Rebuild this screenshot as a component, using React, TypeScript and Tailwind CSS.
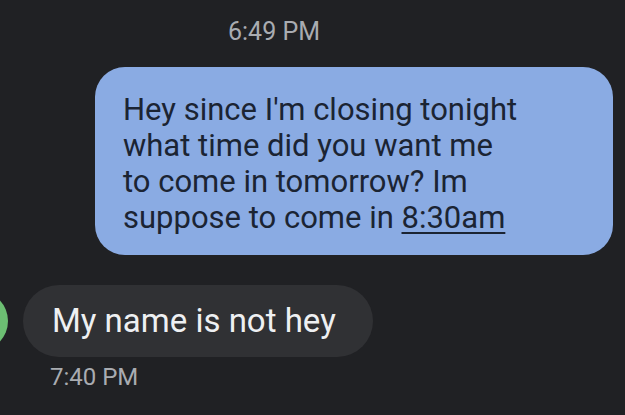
import React from "react";

const App = () => {
  return (
    <div className="w-[625px] h-[415px] overflow-hidden bg-[#202124] font-['Roboto',sans-serif]">
      <div className="pt-[16px] pl-[228px] text-[25px] leading-[32px] text-[#a9acb1]">
        6:49 PM
      </div>

      <div className="mt-[19px] ml-[95px] w-[518px] h-[188px] rounded-[30px] bg-[#8aabe3] pl-[28px] pt-[25px] text-[31px] leading-[36px] text-[#1b2433]">
        Hey since I'm closing tonight
        <br />
        what time did you want me
        <br />
        to come in tomorrow? Im
        <br />
        suppose to come in <span className="underline underline-offset-[4px] decoration-[2px]">8:30am</span>
      </div>

      <div className="mt-[30px] flex items-center">
        <div className="ml-[-52px] w-[60px] h-[60px] rounded-full bg-[#6cbf73] shrink-0" />
        <div className="ml-[15px] h-[72px] rounded-full bg-[#303134] pl-[29px] pr-[37px] flex items-center text-[33px] text-[#eef0f2]">
          My name is not hey
        </div>
      </div>

      <div className="pt-[5px] pl-[50px] text-[24px] leading-[30px] text-[#a9acb1]">7:40 PM</div>
    </div>
  );
};

export default App;
